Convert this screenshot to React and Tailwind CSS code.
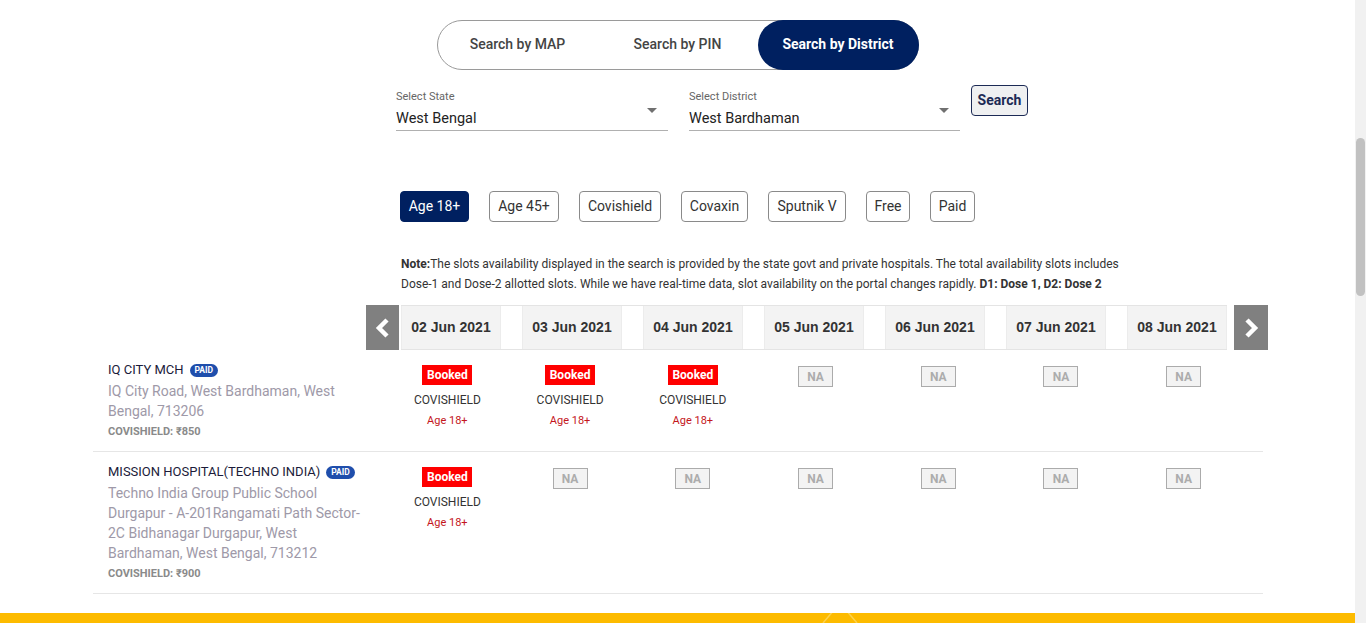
import React from "react";

const dates = ["02 Jun 2021", "03 Jun 2021", "04 Jun 2021", "05 Jun 2021", "06 Jun 2021", "07 Jun 2021", "08 Jun 2021"];

const chips = [
  { label: "Age 18+", w: "w-[69px]", active: true },
  { label: "Age 45+", w: "w-[70px]" },
  { label: "Covishield", w: "w-[82px]" },
  { label: "Covaxin", w: "w-[67px]" },
  { label: "Sputnik V", w: "w-[78px]" },
  { label: "Free", w: "w-[44px]" },
  { label: "Paid", w: "w-[45px]" },
];

const rows = [
  {
    name: "IQ CITY MCH",
    address: ["IQ City Road, West Bardhaman, West", "Bengal, 713206"],
    price: "COVISHIELD: ₹850",
    h: "h-[102px]",
    slots: ["b", "b", "b", "na", "na", "na", "na"],
  },
  {
    name: "MISSION HOSPITAL(TECHNO INDIA)",
    address: [
      "Techno India Group Public School",
      "Durgapur - A-201Rangamati Path Sector-",
      "2C Bidhanagar Durgapur, West",
      "Bardhaman, West Bengal, 713212",
    ],
    price: "COVISHIELD: ₹900",
    h: "h-[142px]",
    slots: ["b", "na", "na", "na", "na", "na", "na"],
  },
];

function Chevron({ dir }) {
  return (
    <svg width="16" height="20" viewBox="0 0 16 20">
      {dir === "left" ? (
        <polyline points="12,2 4,10 12,18" fill="none" stroke="white" strokeWidth="4.5" strokeLinejoin="miter" />
      ) : (
        <polyline points="4,2 12,10 4,18" fill="none" stroke="white" strokeWidth="4.5" strokeLinejoin="miter" />
      )}
    </svg>
  );
}

function Select({ label, value, w, className = "" }) {
  return (
    <div className={`${w} ${className} pt-[5px]`}>
      <div className="text-[11px] leading-[13px] text-[#666]">{label}</div>
      <div className="flex h-[28px] items-end justify-between border-b border-[#b0b0b0] pb-[3px]">
        <span className="text-[14.5px] leading-[17px] text-[#222]">{value}</span>
        <span className="mb-[14px] mr-[11px] h-0 w-0 border-x-[5px] border-t-[5px] border-x-transparent border-t-[#707070]" />
      </div>
    </div>
  );
}

export default function App() {
  return (
    <div className="flex h-[623px] w-[1366px] overflow-hidden bg-white font-['Roboto',sans-serif] text-[#333]">
      <div className="flex w-[1355px] flex-col">
        {/* Toggle */}
        <div className="mt-[20px] flex justify-center">
          <div className="flex h-[50px] w-[482px] items-center rounded-full border border-[#9a9a9a]">
            <div className="flex h-full w-[160px] items-center justify-center pb-px text-[14px] font-medium text-[#444]">Search by MAP</div>
            <div className="flex h-full w-[160px] items-center justify-center pb-px text-[14px] font-medium text-[#444]">Search by PIN</div>
            <div className="-mr-px flex h-[50px] w-[161px] items-center justify-center rounded-full bg-[#002060] pb-px text-[14px] font-bold text-white">Search by District</div>
          </div>
        </div>

        {/* Selects */}
        <div className="ml-[396px] mt-[15px] flex items-start">
          <Select label="Select State" value="West Bengal" w="w-[272px]" />
          <Select label="Select District" value="West Bardhaman" w="w-[271px]" className="ml-[21px]" />
          <button className="ml-[11px] h-[31px] w-[57px] rounded-[4px] border border-[#1c2a55] bg-[#eff0f1] text-[14px] font-bold text-[#1c2a55]">
            Search
          </button>
        </div>

        {/* Chips */}
        <div className="ml-[400px] mt-[60px] flex gap-[20px]">
          {chips.map((c) => (
            <div
              key={c.label}
              className={`${c.w} flex h-[31px] items-center justify-center rounded-[4px] border text-[14px] ${
                c.active ? "border-[#002060] bg-[#002060] text-white" : "border-[#8a8a8a] bg-white text-[#333]"
              }`}
            >
              {c.label}
            </div>
          ))}
        </div>

        {/* Note */}
        <div className="ml-[401px] mt-[32px] text-[12px] leading-[20px] text-[#333]">
          <b>Note:</b>The slots availability displayed in the search is provided by the state govt and private hospitals. The total availability slots includes
          <br />
          Dose-1 and Dose-2 allotted slots. While we have real-time data, slot availability on the portal changes rapidly. <b>D1: Dose 1, D2: Dose 2</b>
        </div>

        {/* Date bar */}
        <div className="ml-[366px] mt-[11px] flex h-[45px] items-stretch">
          <div className="flex w-[33px] items-center justify-center bg-[#808080]">
            <Chevron dir="left" />
          </div>
          <div className="ml-[2px] flex gap-[21px] border-y border-[#e4e4e4]">
            {dates.map((d) => (
              <div
                key={d}
                className="flex w-[100px] items-center justify-center border-x border-[#ececec] bg-[#f3f3f3] font-['Liberation_Sans',Arial,sans-serif] text-[14px] font-bold text-[#333]"
              >
                {d}
              </div>
            ))}
          </div>
          <div className="ml-[7px] flex w-[34px] items-center justify-center bg-[#808080]">
            <Chevron dir="right" />
          </div>
        </div>

        {/* Rows */}
        <div className="ml-[93px] w-[1170px]">
          {rows.map((r) => (
            <div key={r.name} className={`${r.h} flex border-b border-[#e6e6e6]`}>
              <div className="w-[293px] pl-[15px] pt-[12px]">
                <div className="flex items-center text-[13px] leading-[16px] text-[#1b1b3a]">
                  {r.name}
                  <span className="ml-[6px] flex h-[13px] items-center rounded-full bg-[#1f4eac] px-[5px] text-[8.5px] font-bold leading-none text-white">
                    PAID
                  </span>
                </div>
                <div className="mt-[3px] text-[14px] leading-[20px] text-[#9e99a8]">
                  {r.address.map((a, i) => (
                    <div key={i}>{a}</div>
                  ))}
                </div>
                <div className="mt-[4px] text-[11px] font-bold leading-[14px] text-[#8a8a8a]">{r.price}</div>
              </div>
              <div className="flex w-[859px]">
                {r.slots.map((s, i) => (
                  <div key={i} className="flex flex-1 flex-col items-center pt-[15px]">
                    {s === "b" ? (
                      <>
                        <div className="flex h-[20px] w-[50px] items-center justify-center bg-[#ff0000] text-[12px] font-bold text-white">Booked</div>
                        <div className="mt-[7px] text-[12px] leading-[16px] text-[#333]">COVISHIELD</div>
                        <div className="mt-[6px] text-[11px] leading-[14px] text-[#c4161c]">Age 18+</div>
                      </>
                    ) : (
                      <div className="mt-[1px] flex h-[21px] w-[35px] items-center justify-center border border-[#ababab] bg-[#f3f3f3] text-[12px] font-bold text-[#acacac]">
                        NA
                      </div>
                    )}
                  </div>
                ))}
              </div>
            </div>
          ))}
        </div>

        {/* Footer */}
        <div className="relative mt-auto h-[10px] bg-[#fdbb00]">
          <svg className="absolute left-[820px] top-0" width="40" height="10" viewBox="0 0 40 10">
            <polyline points="3,10 20,-10 37,10" fill="none" stroke="#fdd24d" strokeWidth="1.5" />
          </svg>
        </div>
      </div>

      {/* Scrollbar */}
      <div className="flex w-[11px] flex-col bg-[#f1f1f1]">
        <div className="ml-[1px] mt-[138px] h-[158px] w-[9px] rounded-full bg-[#c1c1c1]" />
      </div>
    </div>
  );
}
